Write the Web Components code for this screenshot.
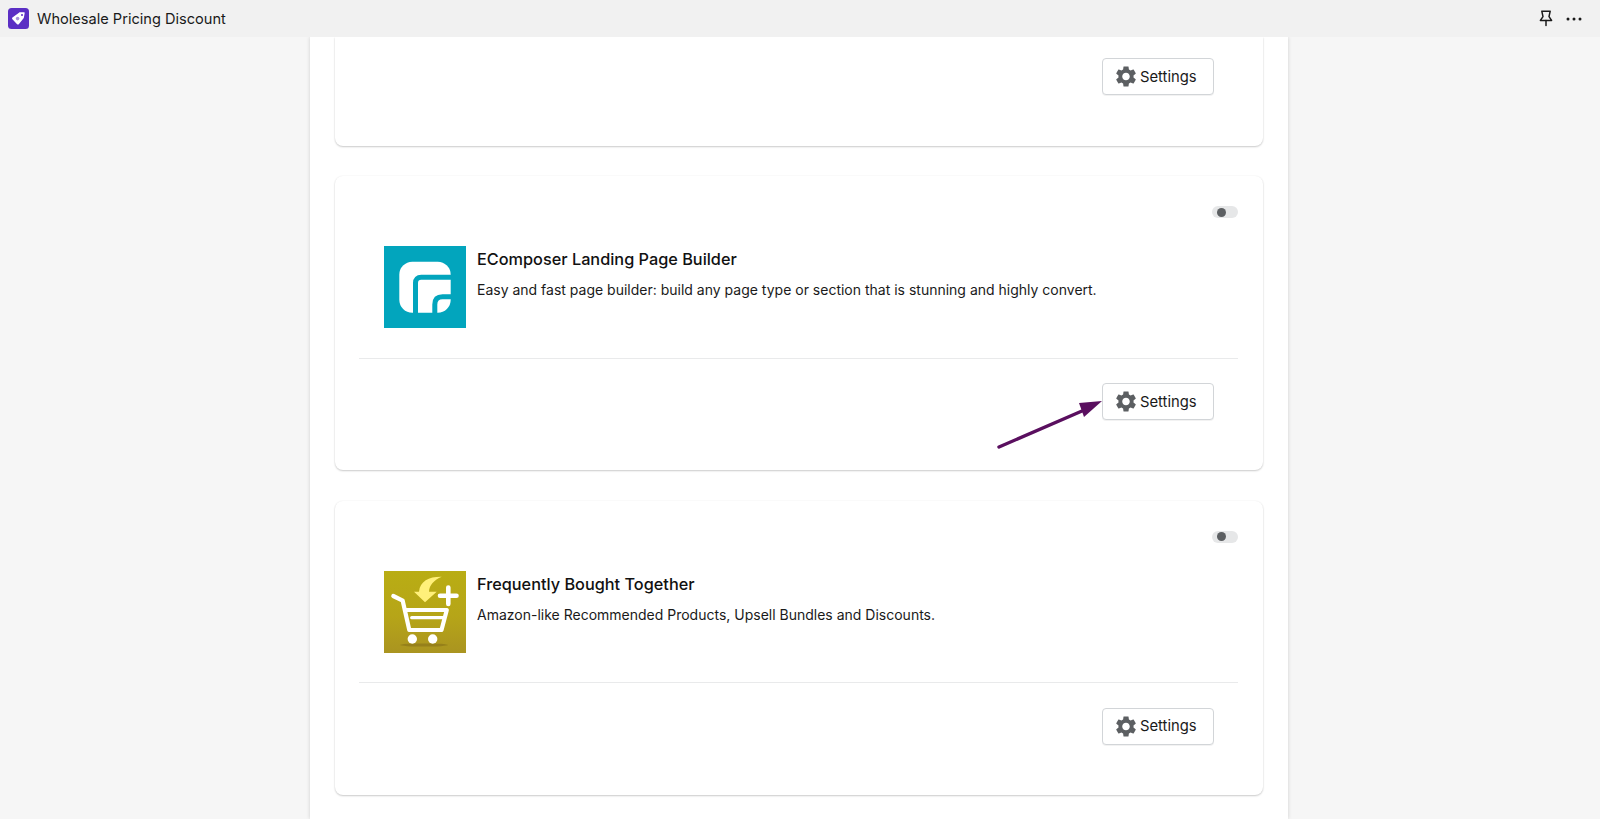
<!DOCTYPE html>
<html lang="en">
<head>
<meta charset="utf-8">
<title>Wholesale Pricing Discount</title>
<style>
  html, body { margin: 0; height: 819px; overflow: hidden; background: #f6f6f6; }
  body { font-family: Inter, "Liberation Sans", sans-serif; color: #1a1a1a; display: flex; flex-direction: column; }
</style>
</head>
<body>
<app-bar label="Wholesale Pricing Discount"></app-bar>
<app-page>
  <addon-card variant="footer-only"></addon-card>
  <addon-card name="EComposer Landing Page Builder" description="Easy and fast page builder: build any page type or section that is stunning and highly convert." arrow>
    <ecomposer-logo slot="logo"></ecomposer-logo>
  </addon-card>
  <addon-card name="Frequently Bought Together" description="Amazon-like Recommended Products, Upsell Bundles and Discounts.">
    <cart-logo slot="logo"></cart-logo>
  </addon-card>
</app-page>

<script>
// Top bar
class AppBar extends HTMLElement {
  connectedCallback() {
    const label = this.getAttribute('label') || '';
    this.attachShadow({ mode: 'open' }).innerHTML = `
      <style>
        :host { display: flex; align-items: center; flex: none; height: 37px; background: #f1f1f1; padding: 0 18px 0 8px; font-size: 14.6px; color: #1a1a1a; position: relative; z-index: 2; }
        .icon { width: 21px; height: 21px; flex: none; margin-right: 8px; }
        .label { flex: 1; }
        .pin { width: 16px; height: 17px; margin-right: 12px; }
        .dots { width: 16px; height: 4px; }
      </style>
      <svg class="icon" viewBox="0 0 21 21">
        <rect width="21" height="21" rx="3.5" fill="#5b2fc4"/>
        <path d="M4.4 9.6 11 4.7c.3-.3.6-.4 1-.4l3.9-.1c.5 0 .9.4.8.9l-.8 4.4c-.1.4-.2.7-.5 1l-4.6 5.7c-.5.5-1.2.5-1.7 0L4.4 11.3c-.5-.5-.5-1.2 0-1.7z" fill="#fff"/>
        <circle cx="14" cy="7" r="1" fill="#5b2fc4"/>
        <circle cx="9.6" cy="10.6" r="1.8" fill="#a893dc"/>
      </svg>
      <span class="label">${label}</span>
      <svg class="pin" viewBox="0 0 16 17" fill="none" stroke="#1a1a1a" stroke-width="1.5" stroke-linejoin="round" stroke-linecap="round">
        <path d="M3.8 1.2h8.4l-1.2 5.4 2.6 3.8H2.4L5 6.6z"/>
        <path d="M8 10.6v5"/>
      </svg>
      <svg class="dots" viewBox="0 0 16 4" fill="#1a1a1a">
        <circle cx="2" cy="2" r="1.5"/><circle cx="8" cy="2" r="1.5"/><circle cx="14" cy="2" r="1.5"/>
      </svg>
    `;
  }
}
customElements.define('app-bar', AppBar);

// White column holding the cards
class AppPage extends HTMLElement {
  connectedCallback() {
    this.attachShadow({ mode: 'open' }).innerHTML = `
      <style>
        :host { display: block; flex: 1; min-height: 0; padding-left: 310px; overflow: hidden; }
        .panel { width: 978px; height: 100%; box-sizing: border-box; background: #fff; padding: 0 25px; display: flex; flex-direction: column; gap: 30.5px; box-shadow: 0 0 4px rgba(0,0,0,.16); }
      </style>
      <div class="panel"><slot></slot></div>
    `;
  }
}
customElements.define('app-page', AppPage);

// Settings button
class SettingsButton extends HTMLElement {
  connectedCallback() {
    this.attachShadow({ mode: 'open' }).innerHTML = `
      <style>
        :host { display: inline-flex; align-items: center; box-sizing: border-box; width: 112px; height: 37px; padding-left: 13px; gap: 4px; background: #fff; border: 1px solid #d2d5d8; border-radius: 4px; box-shadow: 0 1px 0 rgba(0,0,0,.05); font-size: 14.8px; color: #1a1a1a; }
        svg { width: 20px; height: 21px; flex: none; }
      </style>
      <svg viewBox="2.5 2 19 20" fill="#5c5f62"><path d="M19.14 12.94c.04-.3.06-.61.06-.94 0-.32-.02-.64-.07-.94l2.03-1.58c.18-.14.23-.41.12-.61l-1.92-3.32c-.12-.22-.37-.29-.59-.22l-2.39.96c-.5-.38-1.03-.7-1.62-.94l-.36-2.54c-.04-.24-.24-.41-.48-.41h-3.84c-.24 0-.43.17-.47.41l-.36 2.54c-.59.24-1.13.57-1.62.94l-2.39-.96c-.22-.08-.47 0-.59.22L2.74 8.87c-.12.21-.08.47.12.61l2.03 1.58c-.05.3-.09.63-.09.94s.02.64.07.94l-2.03 1.58c-.18.14-.23.41-.12.61l1.92 3.32c.12.22.37.29.59.22l2.39-.96c.5.38 1.03.7 1.62.94l.36 2.54c.05.24.24.41.48.41h3.84c.24 0 .44-.17.47-.41l.36-2.54c.59-.24 1.13-.56 1.62-.94l2.39.96c.22.08.47 0 .59-.22l1.92-3.32c.12-.22.07-.47-.12-.61l-2.01-1.58zM12 15.6c-1.98 0-3.6-1.62-3.6-3.6s1.62-3.6 3.6-3.6 3.6 1.62 3.6 3.6-1.62 3.6-3.6 3.6z"/></svg>
      <span>Settings</span>
    `;
  }
}
customElements.define('settings-button', SettingsButton);

// Off state toggle
class ToggleSwitch extends HTMLElement {
  connectedCallback() {
    this.attachShadow({ mode: 'open' }).innerHTML = `
      <style>
        :host { display: flex; align-items: center; box-sizing: border-box; width: 26px; height: 12px; padding-left: 5px; border-radius: 6px; background: #e6e7e8; }
        i { display: block; width: 9px; height: 9px; border-radius: 50%; background: #5c5f62; }
      </style>
      <i></i>
    `;
  }
}
customElements.define('toggle-switch', ToggleSwitch);

// Card for one integration
class AddonCard extends HTMLElement {
  connectedCallback() {
    const footerOnly = this.getAttribute('variant') === 'footer-only';
    const name = this.getAttribute('name') || '';
    const description = this.getAttribute('description') || '';
    const arrow = this.hasAttribute('arrow') ? `
      <svg class="arrow" viewBox="0 0 112 54">
        <path d="M3 50 86 14" stroke="#5a0f5f" stroke-width="3.4" stroke-linecap="round" fill="none"/>
        <path d="M106 4 83 6 88 20z" fill="#5a0f5f"/>
      </svg>` : '';
    const top = footerOnly ? '' : `
      <div class="top"><toggle-switch></toggle-switch></div>
      <div class="body">
        <div class="logo"><slot name="logo"></slot></div>
        <div class="text">
          <div class="name">${name}</div>
          <div class="desc">${description}</div>
        </div>
      </div>`;
    this.attachShadow({ mode: 'open' }).innerHTML = `
      <style>
        :host { display: block; flex: none; box-sizing: border-box; height: 294px; padding: 30px 25.5px 0 24px; background: #fff; border-radius: 8px; box-shadow: 0 1px 2px rgba(0,0,0,.2), 0 0 2px rgba(0,0,0,.05); position: relative; }
        :host([variant="footer-only"]) { height: 108.5px; padding-top: 0; border-radius: 0 0 8px 8px; }
        .top { display: flex; justify-content: flex-end; height: 12px; }
        .body { display: flex; gap: 11px; padding: 28px 0 0 25px; box-sizing: border-box; height: 140.5px; border-bottom: 1px solid #e9eaeb; }
        .logo { width: 82px; height: 82px; flex: none; }
        .text { padding-top: 1px; }
        .name { font-size: 16.3px; line-height: 24px; font-weight: 500; color: #111; }
        .desc { font-size: 14px; line-height: 20px; margin-top: 9px; color: #1a1a1a; }
        .foot { display: flex; justify-content: flex-end; padding: 24.5px 23.5px 0 0; }
        :host([variant="footer-only"]) .foot { padding-top: 21px; }
        .arrow { position: absolute; left: 661px; top: 221px; width: 112px; height: 54px; }
      </style>
      ${top}
      <div class="foot"><settings-button></settings-button></div>
      ${arrow}
    `;
  }
}
customElements.define('addon-card', AddonCard);

// Logos
class EcomposerLogo extends HTMLElement {
  connectedCallback() {
    this.attachShadow({ mode: 'open' }).innerHTML = `
      <style>:host { display: block; width: 82px; height: 82px; } svg { display: block; }</style>
      <svg width="82" height="82" viewBox="0 0 82 82">
        <rect width="82" height="82" fill="#02a5bd"/>
        <rect x="15.3" y="15.7" width="51.4" height="51" rx="13" fill="#fff"/>
        <path d="M31.5 68V37c0-3.5 2-5.7 5.7-5.7H68" fill="none" stroke="#02a5bd" stroke-width="5"/>
        <path d="M50.8 68v-9.5c0-5 2.5-7.8 7.7-7.8H68" fill="none" stroke="#02a5bd" stroke-width="5"/>
      </svg>
    `;
  }
}
customElements.define('ecomposer-logo', EcomposerLogo);

class CartLogo extends HTMLElement {
  connectedCallback() {
    this.attachShadow({ mode: 'open' }).innerHTML = `
      <style>:host { display: block; width: 82px; height: 82px; } svg { display: block; }</style>
      <svg width="82" height="82" viewBox="0 0 82 82">
        <defs>
          <linearGradient id="gold" x1="0" y1="0" x2="0" y2="1">
            <stop offset="0" stop-color="#b9ad14"/>
            <stop offset=".55" stop-color="#b6a518"/>
            <stop offset="1" stop-color="#aa9420"/>
          </linearGradient>
        </defs>
        <rect width="82" height="82" fill="url(#gold)"/>
        <ellipse cx="40" cy="74" rx="24" ry="1.6" fill="#96801a"/>
        <path d="M57.7 5.7C45 5.5 36 10 35 20.7h-5L41 31.3l11.7-10.6H45C45.3 14 50 9 57.7 5.7z" fill="#fff07a"/>
        <g fill="none" stroke="#fff" stroke-linecap="round" stroke-linejoin="round">
          <path d="M9.3 25l9.4 4.7 6.6 29.3H57.5L62.8 39H21.7" stroke-width="4.2"/>
          <path d="M27.7 46.7H59.5" stroke-width="3.2"/>
          <path d="M64.3 16.5v16.5M56 24.7h16.5" stroke-width="4.6"/>
        </g>
        <circle cx="28.3" cy="68" r="4.7" fill="#fff"/>
        <circle cx="48.7" cy="68" r="4.7" fill="#fff"/>
      </svg>
    `;
  }
}
customElements.define('cart-logo', CartLogo);
</script>
</body>
</html>
